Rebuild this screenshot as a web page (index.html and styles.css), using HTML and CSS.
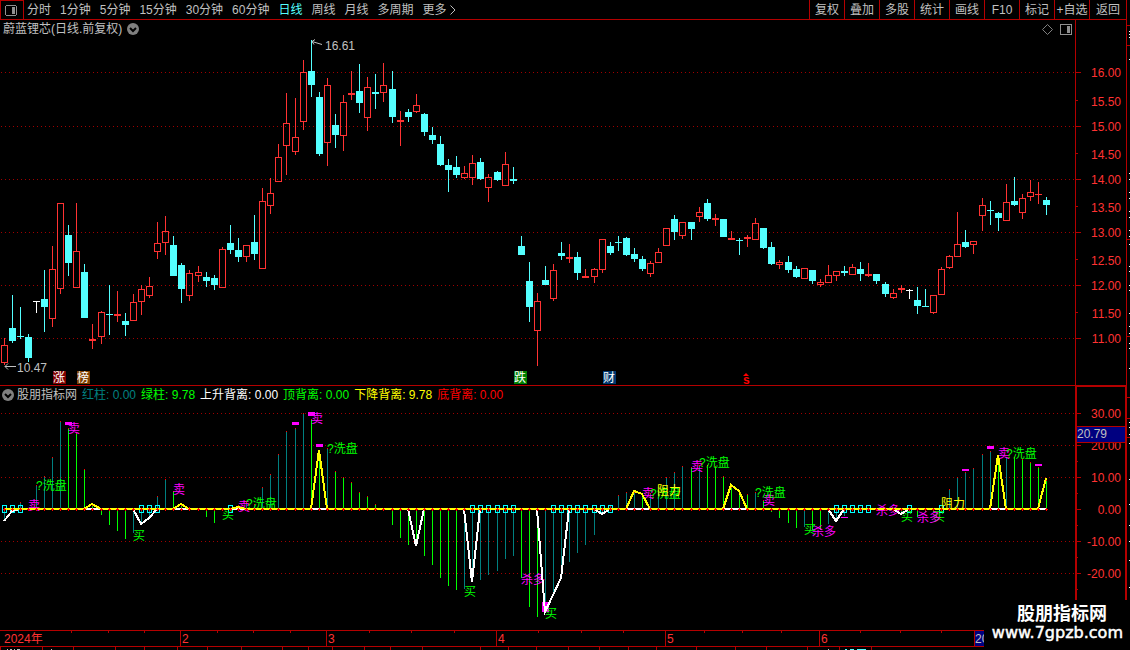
FILE: index.html
```html
<!DOCTYPE html>
<html lang="zh-CN">
<head>
    <meta charset="UTF-8">
    <meta name="viewport" content="width=device-width, initial-scale=1.0">
    <title>蔚蓝锂芯 日线</title>
    <link rel="stylesheet" href="styles.css">
</head>
<body>
    <div class="screen">
        <header class="toolbar">
            <button type="button" class="layout-btn" aria-label="布局">
                <svg width="12" height="11" viewBox="0 0 12 11">
                    <rect x="0.5" y="0.5" width="11" height="10" rx="2" fill="none" stroke="#909090"/>
                    <rect x="7" y="2" width="3" height="7" fill="#909090"/>
                </svg>
            </button>
            <nav class="periods">
                <button type="button">分时</button>
                <button type="button">1分钟</button>
                <button type="button">5分钟</button>
                <button type="button">15分钟</button>
                <button type="button">30分钟</button>
                <button type="button">60分钟</button>
                <button type="button" class="active">日线</button>
                <button type="button">周线</button>
                <button type="button">月线</button>
                <button type="button">多周期</button>
                <button type="button">更多
                    <svg width="6" height="10" viewBox="0 0 6 10"><path d="M0.5 0.5L5 5L0.5 9.5" fill="none" stroke="#c0c0c0"/></svg>
                </button>
            </nav>
            <div class="tools">
                <button type="button">复权</button>
                <button type="button">叠加</button>
                <button type="button">多股</button>
                <button type="button">统计</button>
                <button type="button">画线</button>
                <button type="button">F10</button>
                <button type="button">标记</button>
                <button type="button">+自选</button>
                <button type="button">返回</button>
            </div>
        </header>

        <!-- K line -->
        <section class="panel panel-price">
            <div class="plot">
                <div class="plot-head">
                    <h1>蔚蓝锂芯(日线.前复权)</h1>
                    <button type="button" class="drop" aria-label="展开">
                        <svg width="12" height="12" viewBox="0 0 12 12">
                            <circle cx="6" cy="6" r="6" fill="#808080"/>
                            <path d="M3 5L6 8L9 5" fill="none" stroke="#000" stroke-width="2"/>
                        </svg>
                    </button>
                    <div class="head-icons">
                        <svg width="11" height="11" viewBox="0 0 11 11"><path d="M5.5 0.5L10.5 5.5L5.5 10.5L0.5 5.5Z" fill="none" stroke="#808080"/></svg>
                        <svg width="12" height="11" viewBox="0 0 12 11">
                            <rect x="0.5" y="0.5" width="11" height="10" rx="1" fill="none" stroke="#909090"/>
                            <rect x="7" y="2" width="3" height="7" fill="#909090"/>
                        </svg>
                    </div>
                </div>
                <svg class="chart chart-price"><g id="price" transform="translate(0,-38)"></g></svg>
            </div>
            <svg class="axis"><g id="priceAxis" transform="translate(-1076,-20)"></g></svg>
        </section>

        <!-- Indicator -->
        <section class="panel panel-indicator">
            <div class="plot">
                <div class="plot-head">
                    <button type="button" class="drop" aria-label="指标">
                        <svg width="12" height="12" viewBox="0 0 12 12">
                            <circle cx="6" cy="6" r="6" fill="#808080"/>
                            <path d="M3 5L6 8L9 5" fill="none" stroke="#000" stroke-width="2"/>
                        </svg>
                    </button>
                    <h2>股朋指标网</h2>
                    <span class="teal">红柱: 0.00</span>
                    <span class="green">绿柱: 9.78</span>
                    <span class="white">上升背离: 0.00</span>
                    <span class="green">顶背离: 0.00</span>
                    <span class="yellow">下降背离: 9.78</span>
                    <span class="red">底背离: 0.00</span>
                </div>
                <svg class="chart chart-indicator"><g id="indicator" transform="translate(0,-403)"></g></svg>
            </div>
            <svg class="axis"><g id="indicatorAxis" transform="translate(-1077,-387)"></g></svg>
        </section>

        <svg class="timeline"><g id="timeline" transform="translate(0,-631)"></g></svg>
        <svg class="ticker"><g id="ticker"></g></svg>
    </div>

    <svg class="side"><g id="side"></g></svg>

    <div class="watermark">
        <strong>股朋指标网</strong>
        <span>www.7gpzb.com</span>
    </div>

    <script src="chart.js"></script>
</body>
</html>
```

FILE: styles.css
```css
* {
    box-sizing: border-box;
}
body {
    margin: 0;
    display: flex;
    min-height: 100vh;
    background-color: #000;
    color: #c0c0c0;
    font-family: "Liberation Sans", "Noto Sans CJK SC", sans-serif;
    font-size: 12px;
    line-height: 16px;
    overflow: hidden;
}
svg {
    display: block;
    flex: none;
}
button {
    font: inherit;
    color: inherit;
    background: none;
    border: none;
    padding: 0;
    cursor: pointer;
    white-space: nowrap;
}
h1, h2 {
    margin: 0;
    font-size: 12px;
    font-weight: normal;
}
.screen {
    flex: 1;
    min-width: 0;
}

/* Toolbar */
.toolbar {
    display: flex;
    height: 20px;
    border-bottom: 1px solid #b40000;
}
.layout-btn {
    width: 24px;
    padding-left: 4px;
    border: 1px solid #b40000;
    border-bottom: none;
}
.periods {
    display: flex;
    gap: 9px;
    padding-left: 3px;
}
.periods button {
    display: flex;
    align-items: center;
    gap: 3px;
}
.periods .active {
    color: #54ffff;
}
.tools {
    display: flex;
    margin-left: auto;
}
.tools button {
    width: 35px;
    border-left: 1px solid #b40000;
}
.tools button:last-child {
    width: 37px;
}

/* Panels */
.panel {
    display: flex;
}
.panel-price {
    border-bottom: 1px solid #b40000;
}
.plot {
    flex: 1;
    min-width: 0;
}
.plot-head {
    display: flex;
    align-items: center;
    gap: 5px;
    height: 18px;
    padding: 0 3px;
}
.panel-indicator .plot-head {
    height: 17px;
    padding-left: 2px;
}
.panel-indicator h2 {
    margin-left: -2px;
}
.head-icons {
    display: flex;
    gap: 7px;
    margin-left: auto;
}
.chart {
    width: 100%;
}
.chart-price {
    height: 347px;
}
.chart-indicator {
    height: 227px;
}
.axis {
    width: 51px;
    border-left: 1px solid #b40000;
}
.panel-price .axis {
    height: 365px;
}
.panel-indicator .axis {
    height: 244px;
    border: solid #b40000;
    border-width: 1px 1px 0 2px;
}
.timeline {
    width: 100%;
    height: 17px;
    border-top: 1px solid #b40000;
    border-bottom: 1px solid #b40000;
}
.ticker {
    width: 100%;
    height: 3px;
}
.side {
    width: 4px;
    height: 650px;
    border-left: 1px solid #b40000;
}

/* Chart shapes */
.grid {
    stroke: #a00000;
    stroke-dasharray: 1 3;
}
.frame {
    fill: #b40000;
}
rect, polyline, .grid {
    shape-rendering: crispEdges;
}
.axis-text {
    fill: #ff3232;
}
.teal {
    color: #008080;
}
.green {
    color: #00ff00;
}
.white {
    color: #fff;
}
.yellow {
    color: #ffff00;
}
.red {
    color: #ff0000;
}

.watermark {
    position: absolute;
    right: 0;
    top: 600px;
    width: 146px;
    height: 50px;
    padding: 4px 7px 0;
    display: flex;
    flex-direction: column;
    align-items: flex-end;
    background-color: #000;
    color: #fff;
}
.watermark strong {
    padding-right: 16px;
    font-size: 18px;
    line-height: 20px;
}
.watermark span {
    font-family: "DejaVu Sans", sans-serif;
    font-size: 16px;
    line-height: 18px;
    -webkit-text-stroke: 0.5px #fff;
}
```

FILE: chart.js
```js
const RED = '#ff3232', CYAN = '#54ffff', WHITE = '#ffffff';
const GREEN = '#00ff00', TEAL = '#008080', MAGENTA = '#ff00ff', YELLOW = '#ffff00';
const ZERO = 509;

// type, high, body top, body bottom, low
const candles = [
    'r 338 345 363 365', 'c 295 328 341 343', 'c 307 336 337 339', 'c 334 337 358 362', 'w 301 301 302 313',
    'c 270 299 307 332', 'r 246 269 319 327', 'r 203 203 289 294', 'c 225 235 263 276', 'r 203 251 288 288',
    'c 264 272 318 318', 'r 324 339 341 349', 'r 311 312 337 344', 'c 285 314 315 335', 'r 291 314 316 322',
    'c 313 321 325 336', 'r 294 302 321 321', 'r 285 289 302 315', 'r 277 286 296 298', 'r 222 243 252 259',
    'r 216 231 243 255', 'c 236 245 276 276', 'c 263 265 289 303', 'r 270 273 296 301', 'r 266 272 276 282',
    'c 272 277 281 287', 'c 275 278 285 290', 'r 247 249 288 288', 'c 225 243 250 254', 'c 238 250 257 262',
    'r 245 245 257 262', 'c 215 242 254 260', 'r 188 201 269 269', 'r 178 193 206 214', 'r 144 157 182 182',
    'r 93 123 146 175', 'r 98 137 152 155', 'r 60 72 122 130', 'c 40 71 85 97', 'c 92 97 154 156',
    'r 78 85 143 166', 'c 114 125 135 148', 'r 95 102 136 151', 'r 71 93 95 100', 'c 64 91 103 113',
    'r 77 87 118 131', 'c 74 92 94 109', 'r 63 85 93 102', 'c 71 89 117 123', 'r 111 120 122 146',
    'c 109 112 117 122', 'r 94 105 112 113', 'c 113 114 132 136', 'c 127 135 140 144', 'c 136 144 165 166',
    'c 159 165 170 192', 'c 156 167 175 178', 'r 166 173 178 179', 'r 155 163 178 185', 'c 158 162 179 180',
    'r 174 177 188 202', 'c 171 172 180 181', 'r 152 164 186 186', 'c 167 179 181 184', 'c 236 246 255 255',
    'c 262 281 307 322', 'r 293 301 331 366', 'c 266 280 285 285', 'r 264 270 299 301', 'c 242 253 256 260',
    'r 244 257 259 263', 'c 252 257 273 280', 'r 269 276 278 278', 'r 268 269 277 283', 'r 239 239 270 273',
    'c 242 246 253 255', 'c 236 242 243 251', 'c 237 238 255 256', 'c 248 254 259 262', 'c 256 259 269 271',
    'r 261 263 274 277', 'r 248 252 263 263', 'r 228 228 246 246', 'c 215 219 232 240', 'r 222 222 236 239',
    'c 222 222 229 240', 'r 207 212 217 222', 'c 199 203 219 221', 'r 214 218 220 226', 'c 219 219 237 237',
    'r 231 238 240 240', 'c 238 240 241 255', 'r 235 237 239 247', 'r 218 223 240 240', 'c 228 228 248 249',
    'c 242 247 264 265', 'r 260 262 265 269', 'c 256 262 270 273', 'c 266 269 277 278', 'r 268 268 279 279',
    'c 270 270 281 284', 'r 279 282 285 287', 'r 265 275 283 283', 'r 271 271 276 281', 'c 266 271 273 276',
    'r 264 267 275 275', 'c 262 269 274 281', 'r 263 274 276 277', 'c 274 274 281 284', 'c 282 284 294 297',
    'r 289 293 298 299', 'r 285 288 290 293', 'w 289 290 291 299', 'c 287 300 306 314', 'c 289 306 307 307',
    'r 295 295 313 314', 'r 267 269 295 295', 'r 255 256 268 269', 'r 212 244 257 257', 'c 230 242 247 248',
    'r 241 241 245 254', 'r 198 205 216 231', 'c 201 210 211 225', 'c 212 213 218 231', 'r 184 202 221 221',
    'c 177 201 205 206', 'r 194 198 213 219', 'r 180 192 197 201', 'r 182 194 195 204', 'c 197 200 205 215'
];

// bar tips, t = teal, g = green
const bars = ('t520 t512 t502 t508 t485 t476 t457 t421 g428 g433 g469 g505 g515 g525 g531 g539 t533 t522 t517 t496 ' +
    't479 g491 g505 g507 g509 g517 g523 t511 t509 t505 t502 t504 t487 t474 t454 t431 t428 t413 g419 g457 ' +
    't448 g471 g477 g482 g492 g496 g504 g509 g525 g538 g545 g542 g556 g565 g578 g586 g590 t589 t582 t580 ' +
    't575 t571 t559 t556 g578 g607 g617 t610 t595 t578 t562 t553 t545 t535 t515 t506 t495 t492 t492 g495 ' +
    't493 t490 t477 t472 t466 g467 t465 g465 g466 g476 g487 g492 g494 t492 g500 g512 g518 g523 g528 t527 ' +
    'g530 g530 t524 t520 t516 t509 t509 t509 t509 g509 g509 t512 t509 g517 g512 g512 t509 t489 t477 t472 ' +
    't468 t454 t451 g460 t457 g457 g459 g462 g467 g480').split(' ');

const boxes = [0, 1, 2, 17, 18, 19, 28, 58, 59, 60, 61, 62, 63, 68, 69, 70, 71, 72, 73, 74, 75, 103, 104, 105, 106, 107, 112, 116];

const yellowLine = '4,509 84,509 92,504 101,509 173,509 181,504 189,509 230,509 238,507 246,509 311,509 319,450 327,509 ' +
    '626,509 634,491 642,494 650,509 723,509 731,485 739,491 747,509 990,509 998,455 1006,509 1038,509 1046,478';
const whiteLine = '4,521 12,511 20,509 133,509 141,524 149,518 157,509 408,509 416,546 424,509 464,509 472,582 480,509 ' +
    '537,509 545,612 553,595 561,578 569,509 594,509 602,514 610,509 828,509 836,521 844,509 893,509 901,514 909,509 1046,509';

const markers = [
    [65, 422, 7, 3], [292, 422, 7, 3], [308, 412, 7, 4], [316, 444, 7, 3], [542, 602, 7, 10],
    [841, 517, 7, 1], [962, 469, 7, 2], [987, 446, 7, 3], [1035, 464, 7, 2]
];

const signals = [
    ['卖', MAGENTA, 68, 422], ['卖', MAGENTA, 28, 499], ['卖', MAGENTA, 173, 483], ['卖', MAGENTA, 238, 500],
    ['卖', MAGENTA, 311, 412], ['卖', MAGENTA, 642, 487], ['卖', MAGENTA, 691, 460], ['卖', MAGENTA, 763, 494],
    ['卖', MAGENTA, 998, 447],
    ['?洗盘', GREEN, 36, 479], ['?洗盘', GREEN, 246, 497], ['?洗盘', GREEN, 327, 442], ['?洗盘', GREEN, 650, 487],
    ['?洗盘', GREEN, 699, 456], ['?洗盘', GREEN, 755, 486], ['?洗盘', GREEN, 1006, 447],
    ['买', GREEN, 133, 529], ['买', GREEN, 222, 508], ['买', GREEN, 464, 585], ['买', GREEN, 545, 607],
    ['买', GREEN, 804, 523], ['买', GREEN, 901, 510], ['买', GREEN, 933, 510],
    ['杀多', MAGENTA, 521, 573], ['杀多', MAGENTA, 812, 525], ['杀多', MAGENTA, 876, 504], ['杀多', MAGENTA, 917, 511],
    ['阻力', YELLOW, 657, 484], ['阻力', YELLOW, 941, 497]
];

const candleX = i => Math.floor(4.06 + i * 8.0822);
const rect = (x, y, w, h, fill) => `<rect x="${x}" y="${y}" width="${w}" height="${h}" fill="${fill}"/>`;
const frame = (x, y, w, h) => `<rect class="frame" x="${x}" y="${y}" width="${w}" height="${h}"/>`;
const text = (s, x, y, fill) => `<text x="${x}" y="${y}" fill="${fill}">${s}</text>`;
const grid = y => `<line class="grid" x1="1" x2="4000" y1="${y}.5" y2="${y}.5"/>`;
const axisText = (s, y) => `<text class="axis-text" x="1121" y="${y + 5}" text-anchor="end">${s}</text>`;
const draw = (id, html) => { document.getElementById(id).innerHTML = html; };

function drawPrice() {
    let out = [72, 126, 179, 232, 285, 338].map(grid).join('');
    candles.forEach((row, i) => {
        const [type, ...v] = row.split(' ');
        const [high, top, bottom, low] = v.map(Number);
        const x = candleX(i);
        const color = { r: RED, c: CYAN, w: WHITE }[type];
        out += rect(x, high, 1, top - high, color) + rect(x, bottom, 1, low - bottom, color);
        if (type === 'r' && bottom - top > 2) {
            out += `<rect x="${x - 2.5}" y="${top + 0.5}" width="6" height="${bottom - top - 1}" fill="none" stroke="${color}"/>`;
        } else {
            out += rect(x - 3, top, 7, bottom - top, color);
        }
    });
    // high and low of the period
    out += '<path d="M322 44.5L312 41.5M315 39.5L312 41.5L314 44.5" fill="none" stroke="#c0c0c0"/>' + text('16.61', 325, 50, '#c0c0c0');
    out += '<path d="M16 366.5H5M8 363.5L5 366.5L8 369.5" fill="none" stroke="#c0c0c0"/>' + text('10.47', 17, 372, '#c0c0c0');
    [['涨', 53, '#800000'], ['榜', 77, '#804000'], ['跌', 514, '#008000'], ['财', 603, '#003870']].forEach(([s, x, bg]) => {
        out += rect(x, 371, 13, 13, bg) + text(s, x, 382, '#fff');
    });
    out += '<path d="M743 376L746 373L749 376Z" fill="#ff0000"/>' + '<text x="743" y="384" font-weight="bold" fill="#ff0000">s</text>';
    draw('price', out);

    out = '';
    [[16, 72], [15, 126], [14, 179], [13, 232], [12, 285], [11, 338]].forEach(([n, y]) => {
        out += frame(1076, y, 5, 1) + axisText(n + '.00', y);
        if (n < 16) out += frame(1076, y - 26, 2, 1) + axisText(n + '.50', y - 25);
    });
    draw('priceAxis', out);
}

function drawIndicator() {
    let out = [413, 445, 477, 541, 573].map(grid).join('');
    bars.forEach((bar, i) => {
        const tip = Number(bar.slice(1));
        const color = bar[0] === 't' ? TEAL : GREEN;
        out += rect(candleX(i), Math.min(tip, ZERO), 1, Math.abs(tip - ZERO), color);
        if (tip < ZERO) out += rect(candleX(i), tip, 1, 1, '#ff0000');
    });
    markers.forEach(m => { out += rect(...m, MAGENTA); });
    boxes.forEach(i => {
        out += `<rect x="${candleX(i) - 1.5}" y="505.5" width="4" height="7" fill="none" stroke="#00ffff"/>`;
    });
    signals.forEach(([s, color, x, y]) => { out += text(s, x, y + 11, color); });
    out += `<polyline points="${whiteLine}" fill="none" stroke="#fff" stroke-width="2"/>`;
    out += `<polyline points="${yellowLine}" fill="none" stroke="${YELLOW}" stroke-width="2"/>`;
    bars.forEach((bar, i) => {
        const x = candleX(i);
        out += rect(x - 1, 509, 3, 1, '#ff0000') + rect(x, 508, 1, 3, '#ff0000');
    });
    draw('indicator', out);

    out = '';
    [['30.00', 413], ['20.00', 445], ['10.00', 477], ['0.00', 509], ['-10.00', 541], ['-20.00', 573]].forEach(([s, y]) => {
        out += frame(1077, y, 4, 1) + frame(1077, y + 16, 1, 1) + axisText(s, y);
    });
    out += rect(1077, 426, 48, 17, '#000080') + frame(1077, 426, 48, 1) + frame(1077, 442, 48, 1);
    out += text('20.79', 1077, 438, '#c0c0c0');
    draw('indicatorAxis', out);
}

function drawTimeline() {
    let out = '';
    [71, 108, 144, 217, 253, 290, 369, 411, 454, 538, 581, 623, 704, 742, 781, 860, 900, 941].forEach(x => {
        out += frame(x, 631, 1, 2);
    });
    out += text('2024年', 4, 643, RED);
    [['2', 180], ['3', 326], ['4', 496], ['5', 665], ['6', 819]].forEach(([s, x]) => {
        out += frame(x, 631, 1, 15) + text(s, x + 2, 643, RED);
    });
    out += frame(974, 631, 1, 15) + rect(975, 631, 72, 15, '#000080') + text('20', 975, 643, '#c0c0c0');
    draw('timeline', out);

    out = '';
    [0, 42, 73, 115, 144, 177, 207, 241, 282, 308, 332, 364, 390, 422, 480, 508, 536, 568, 599, 628, 656, 696, 735, 766, 807, 839, 871].forEach(x => {
        out += frame(x, 0, 1, 3);
    });
    // tops of the quote line below the window edge
    [[7, 1], [10, 2], [14, 1], [17, 3], [51, 1], [828, 1]].forEach(([x, w]) => { out += rect(x, 2, w, 1, '#c0c0c0'); });
    out += rect(845, 2, 2, 1, CYAN) + rect(850, 2, 4, 1, CYAN) + rect(857, 2, 9, 1, CYAN);
    draw('ticker', out);

    out = '';
    [25, 45, 239, 336, 397, 418, 437].forEach(y => { out += frame(0, y, 3, 1); });
    [31, 34, 37, 59, 173, 179, 192, 198, 211, 217, 230, 236, 244, 266, 271, 285, 290, 313, 326, 333, 343, 348, 368, 422, 427, 434, 443, 479, 504, 525, 541, 560, 587].forEach(y => {
        out += rect(2, y, 1, 1, '#ffffff');
    });
    draw('side', out);
}

drawPrice();
drawIndicator();
drawTimeline();
```
